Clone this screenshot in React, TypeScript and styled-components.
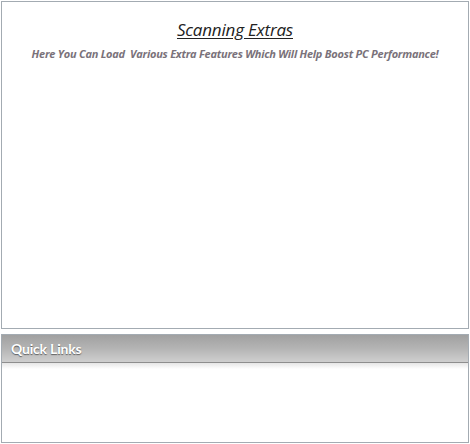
import React from 'react';
import styled, { createGlobalStyle } from 'styled-components';

const Global = createGlobalStyle`
  html, body {
    margin: 0;
    padding: 0;
    background: #ffffff;
  }
  body {
    padding: 1px;
    font-family: 'Open Sans', 'Liberation Sans', sans-serif;
  }
`;

const Page = styled.div`
  display: flex;
  flex-direction: column;
  gap: 5px;
  width: 468px;
`;

const Panel = styled.div<{ $height: number }>`
  box-sizing: border-box;
  height: ${({ $height }) => $height}px;
  border: 1px solid #a3abb2;
  background: #ffffff;
  display: flex;
  flex-direction: column;
`;

const TitleBox = styled.div`
  display: flex;
  flex-direction: column;
  align-items: center;
  padding-top: 16px;
`;

const MainTitle = styled.div`
  font-family: 'Open Sans', sans-serif;
  font-style: italic;
  font-weight: 500;
  font-size: 17px;
  color: #222222;
  text-decoration: underline;
  text-underline-offset: 2px;
  letter-spacing: -0.2px;
`;

const SubTitle = styled.div`
  margin-top: 5px;
  font-family: 'Open Sans', sans-serif;
  font-style: italic;
  font-weight: 700;
  font-size: 11px;
  color: #7a727a;
  letter-spacing: -0.25px;
  white-space: pre;
`;

const Header = styled.div`
  height: 28px;
  box-sizing: border-box;
  display: flex;
  align-items: center;
  padding-left: 9px;
  background: linear-gradient(to bottom, #a0a0a0 0%, #b4b4b4 50%, #cfcfcf 100%);
  border-bottom: 1px solid #8e8e8e;
  font-family: 'Lato', sans-serif;
  font-weight: 700;
  font-size: 14px;
  letter-spacing: -0.2px;
  color: #ffffff;
  text-shadow: 0 1px 1px rgba(0, 0, 0, 0.5);
`;

const HeaderShadow = styled.div`
  height: 6px;
  background: linear-gradient(to bottom, #e6e6e6, #ffffff);
`;

const App = () => {
  return (
    <Page>
      <Global />
      <Panel $height={328}>
        <TitleBox>
          <MainTitle>Scanning Extras</MainTitle>
          <SubTitle>Here You Can Load  Various Extra Features Which Will Help Boost PC Performance!</SubTitle>
        </TitleBox>
      </Panel>
      <Panel $height={109}>
        <Header>Quick Links</Header>
        <HeaderShadow />
      </Panel>
    </Page>
  );
};

export default App;
